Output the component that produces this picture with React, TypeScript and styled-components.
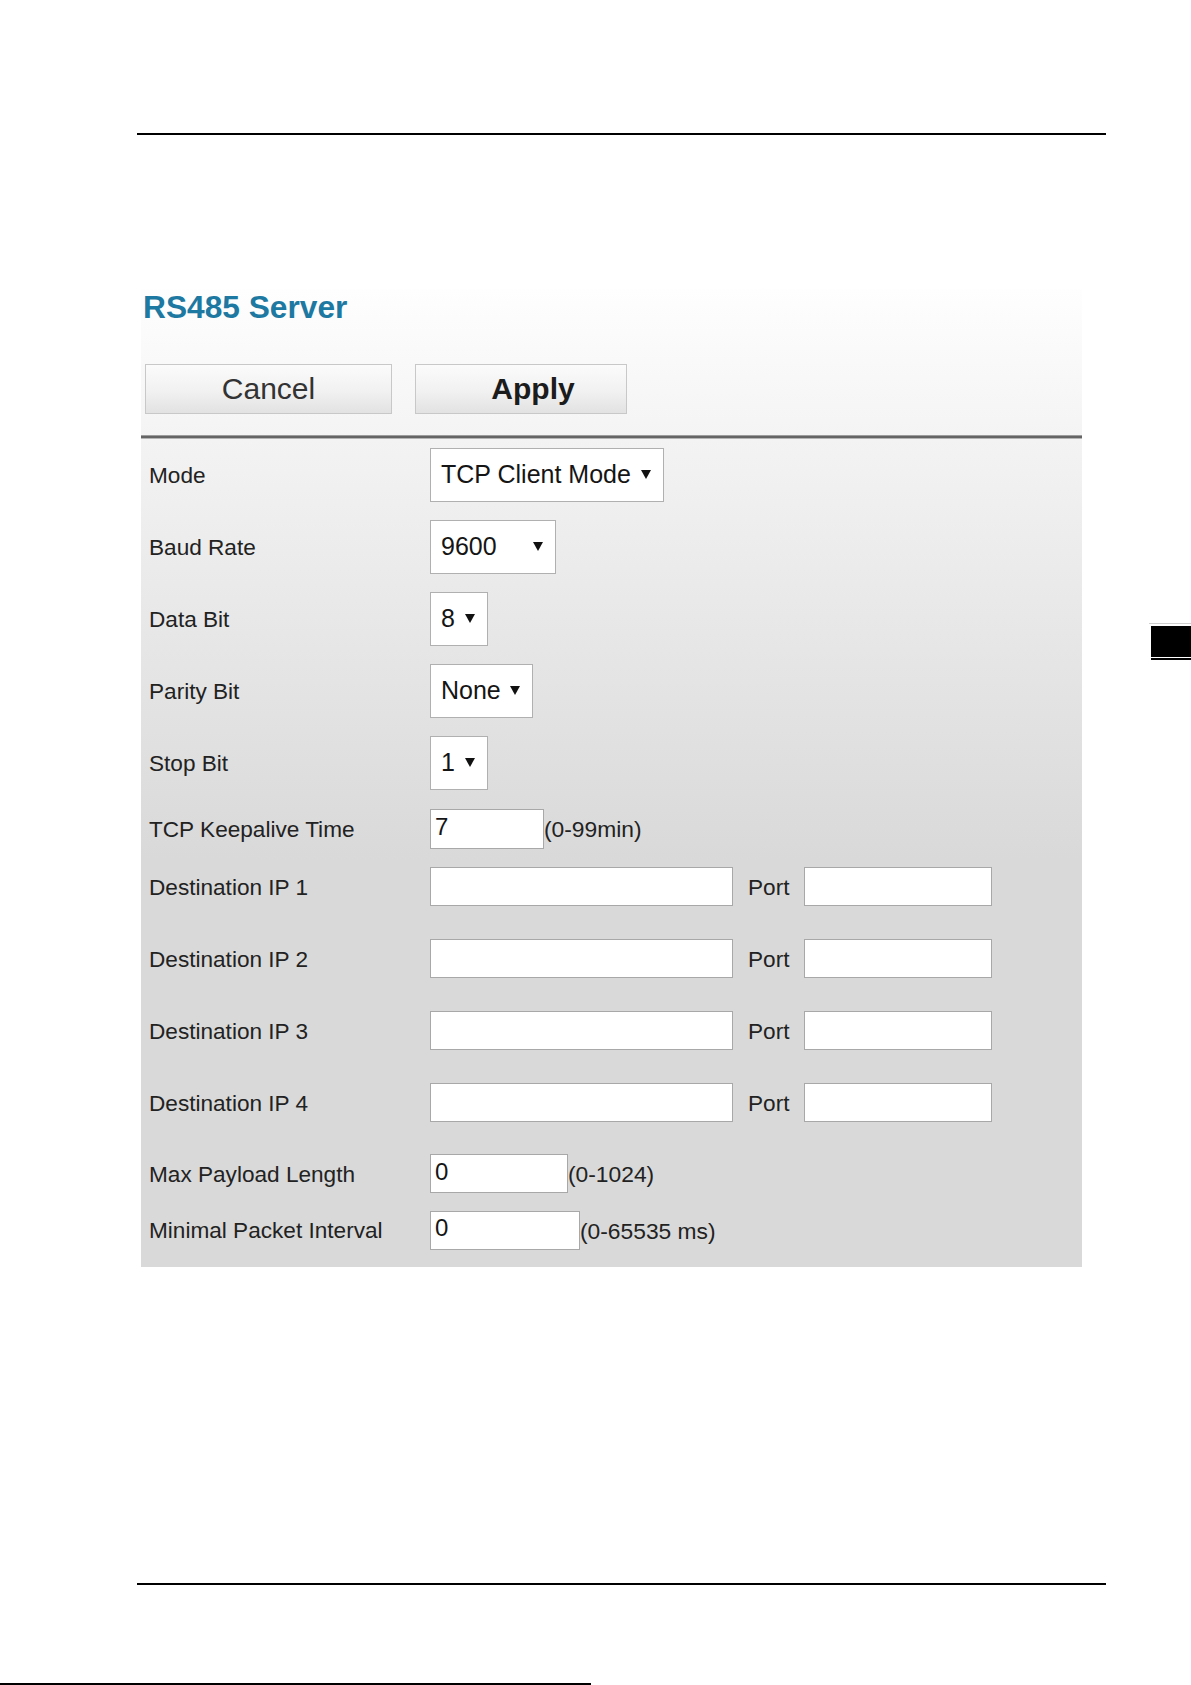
import React from "react";
import styled, {createGlobalStyle} from "styled-components";

const GlobalStyle = createGlobalStyle`
  html, body {
    margin: 0;
    padding: 0;
    background: #fff;
  }
  body {
    font-family: "Liberation Sans", Arial, sans-serif;
  }
`;

const Page = styled.div`
  width: 1191px;
  height: 1685px;
  display: flex;
  flex-direction: column;
  overflow: hidden;
`;

const Rule = styled.div<{ $top: number; $left?: number; $width: number }>`
  flex-shrink: 0;
  margin-top: ${p => p.$top}px;
  margin-left: ${p => p.$left ?? 0}px;
  width: ${p => p.$width}px;
  height: 2px;
  background: #000;
`;

const Main = styled.div`
  display: flex;
  align-items: flex-start;
  margin-top: 154px;
`;

const Panel = styled.div`
  margin-left: 141px;
  width: 941px;
  display: flex;
  flex-direction: column;
`;

const Header = styled.div`
  padding: 0 0 21px 2px;
  background: linear-gradient(to bottom, #fefefe, #f4f4f4);
`;

const Title = styled.h2`
  margin: 0;
  font-size: 31.7px;
  line-height: 37px;
  font-weight: bold;
  color: #1d79a1;
`;

const ButtonRow = styled.div`
  display: flex;
  gap: 23px;
  margin-top: 38px;
  padding-left: 2px;
`;

const Button = styled.button<{ $width: number; $bold?: boolean }>`
  width: ${p => p.$width}px;
  height: 50px;
  padding: 0 0 0 ${p => (p.$bold ? 24 : 0)}px;
  border: 1px solid #c8c8c8;
  background: linear-gradient(to bottom, #fbfbfb 0%, #f1f1f1 55%, #e2e2e2 100%);
  font-family: "Liberation Sans", Arial, sans-serif;
  font-size: 30px;
  font-weight: ${p => (p.$bold ? "bold" : "normal")};
  color: ${p => (p.$bold ? "#1c1c1c" : "#333")};
  cursor: pointer;
`;

const Separator = styled.div`
  height: 4px;
  background: linear-gradient(to bottom, #9c9c9c 0, #9c9c9c 1px, #656565 1px, #656565 3px, #b4b4b4 3px);
`;

const Form = styled.div`
  padding-bottom: 8px;
  background: linear-gradient(to bottom, #f3f3f3 0px, #d9d9d9 420px, #d9d9d9 100%);
`;

const Row = styled.div<{ $height: number; $padBottom?: number }>`
  display: grid;
  grid-template-columns: 289px auto;
  align-items: center;
  box-sizing: border-box;
  height: ${p => p.$height}px;
  padding-bottom: ${p => p.$padBottom ?? 0}px;
`;

const Label = styled.div`
  padding: 2px 0 0 8px;
  font-size: 22.6px;
  color: #222;
`;

const Field = styled.div`
  display: flex;
  align-items: center;
`;

const SelectBox = styled.div<{ $width: number }>`
  box-sizing: border-box;
  width: ${p => p.$width}px;
  height: 54px;
  padding: 0 12px 2px 10px;
  display: flex;
  align-items: center;
  justify-content: space-between;
  background: #fff;
  border: 1px solid #b0b0b0;
  font-size: 25px;
  color: #151515;
`;

const TextBox = styled.div<{ $width: number; $height?: number }>`
  box-sizing: border-box;
  width: ${p => p.$width}px;
  height: ${p => p.$height ?? 39}px;
  padding: 0 0 4px 4px;
  display: flex;
  align-items: center;
  background: #fff;
  border: 1px solid #a8a8a8;
  font-size: 24px;
  color: #151515;
`;

const Hint = styled.span`
  padding-top: 2px;
  font-size: 22.8px;
  color: #222;
`;

const PortLabel = styled.span`
  margin: 0 15px;
  padding-top: 2px;
  font-size: 22.6px;
  color: #222;
`;

const TabColumn = styled.div`
  margin-left: auto;
  margin-top: 334px;
  width: 42px;
  display: flex;
  flex-direction: column;
`;

const TabLine = styled.div<{ $dark?: boolean }>`
  height: ${p => (p.$dark ? 2 : 1)}px;
  margin-left: ${p => (p.$dark ? 2 : 0)}px;
  background: ${p => (p.$dark ? "#000" : "#cfcfcf")};
`;

const TabBlock = styled.div`
  height: 31px;
  margin: 2px 0 1px 2px;
  background: #000;
`;

const Caret = () => (
  <svg width="10" height="9" viewBox="0 0 10 9">
    <polygon points="0,0 10,0 5,9" fill="#111"/>
  </svg>
);

const Select: React.FC<{ width: number; value: string }> = ({width, value}) => (
  <SelectBox $width={width}>
    <span>{value}</span>
    <Caret/>
  </SelectBox>
);

const selects = [
  {label: "Mode", value: "TCP Client Mode", width: 234},
  {label: "Baud Rate", value: "9600", width: 126},
  {label: "Data Bit", value: "8", width: 58},
  {label: "Parity Bit", value: "None", width: 103},
  {label: "Stop Bit", value: "1", width: 58},
];

const destinations = [1, 2, 3, 4];

export default function App() {
  return (
    <>
      <GlobalStyle/>
      <Page>
        <Rule $top={133} $left={137} $width={969}/>
        <Main>
          <Panel>
            <Header>
              <Title>RS485 Server</Title>
              <ButtonRow>
                <Button $width={247}>Cancel</Button>
                <Button $width={212} $bold>Apply</Button>
              </ButtonRow>
            </Header>
            <Separator/>
            <Form>
              {selects.map(s => (
                <Row key={s.label} $height={72}>
                  <Label>{s.label}</Label>
                  <Field>
                    <Select width={s.width} value={s.value}/>
                  </Field>
                </Row>
              ))}
              <Row $height={59}>
                <Label>TCP Keepalive Time</Label>
                <Field>
                  <TextBox $width={114} $height={40}>7</TextBox>
                  <Hint>(0-99min)</Hint>
                </Field>
              </Row>
              {destinations.map(n => (
                <Row key={n} $height={72} $padBottom={15}>
                  <Label>Destination IP {n}</Label>
                  <Field>
                    <TextBox $width={303}/>
                    <PortLabel>Port</PortLabel>
                    <TextBox $width={188}/>
                  </Field>
                </Row>
              ))}
              <Row $height={55}>
                <Label>Max Payload Length</Label>
                <Field>
                  <TextBox $width={138}>0</TextBox>
                  <Hint>(0-1024)</Hint>
                </Field>
              </Row>
              <Row $height={58}>
                <Label>Minimal Packet Interval</Label>
                <Field>
                  <TextBox $width={150}>0</TextBox>
                  <Hint>(0-65535 ms)</Hint>
                </Field>
              </Row>
            </Form>
          </Panel>
          <TabColumn>
            <TabLine/>
            <TabBlock/>
            <TabLine $dark/>
          </TabColumn>
        </Main>
        <Rule $top={316} $left={137} $width={969}/>
        <Rule $top={98} $width={591}/>
      </Page>
    </>
  );
}
